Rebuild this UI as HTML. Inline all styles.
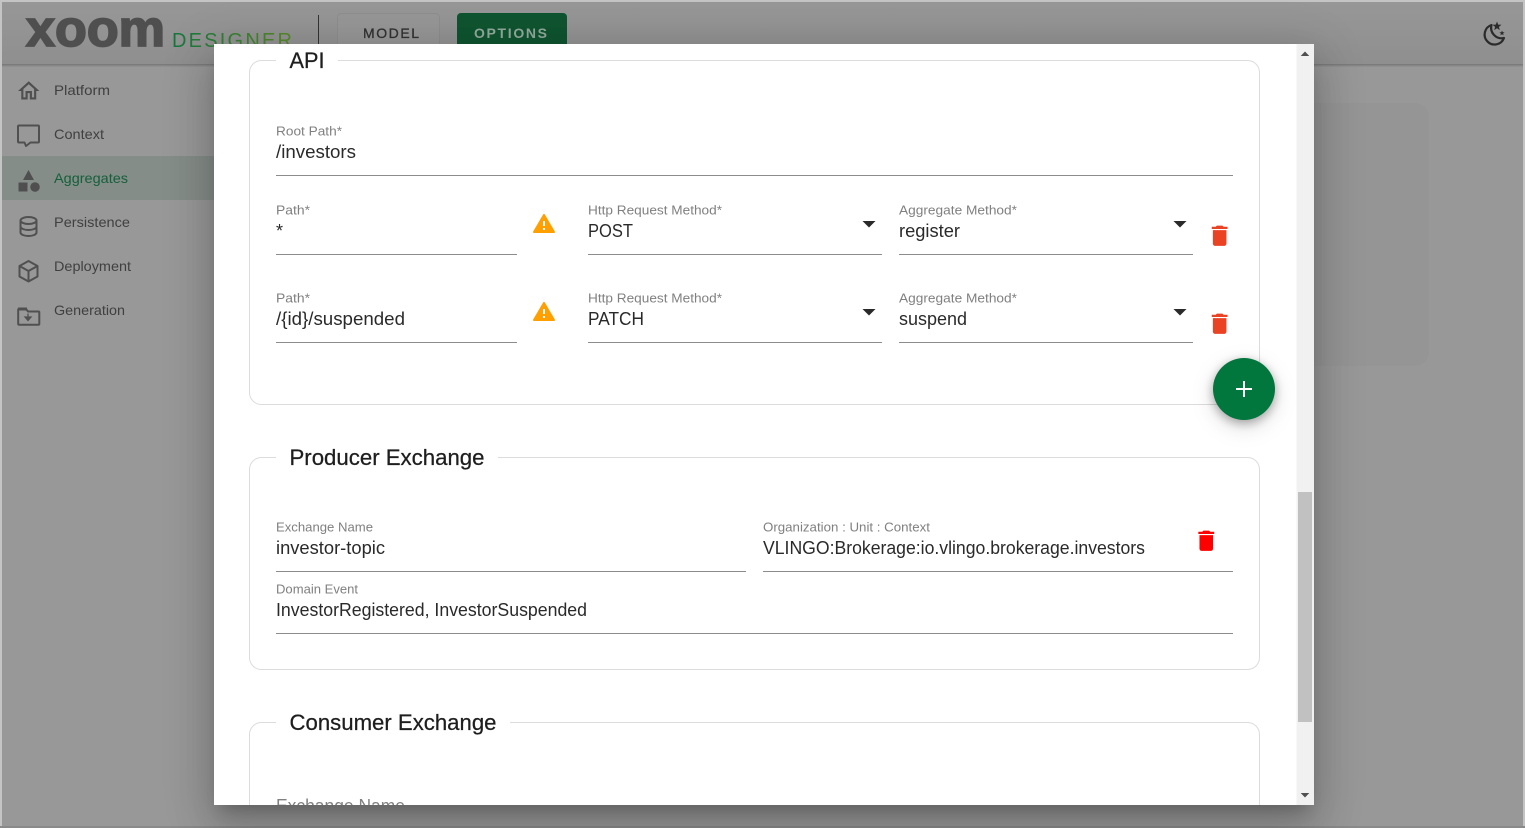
<!DOCTYPE html>
<html><head><meta charset="utf-8"><title>Xoom Designer</title>
<style>
html,body{margin:0;padding:0;width:1525px;height:828px;overflow:hidden;background:#989898}
svg{position:absolute;left:0;top:0;display:block}
text{font-family:"Liberation Sans",sans-serif}
#modal{position:absolute;left:214px;top:44px;width:1100px;height:761px;background:#fff;overflow:hidden;box-shadow:0 11px 15px -7px rgba(0,0,0,.2),0 24px 38px 3px rgba(0,0,0,.14),0 9px 46px 8px rgba(0,0,0,.12)}
.l{font-size:13px;fill:#808080}
.v{font-size:18px;fill:#2a2a2a}
.h{font-size:22px;fill:#1e1e1e;stroke:#1e1e1e;stroke-width:.25}
.n{font-size:14px;fill:#404040}
.u{stroke:#8c8c8c;stroke-width:1}
.f{fill:none;stroke:#dcdcdc;stroke-width:1}
</style></head><body>
<svg width="1525" height="828" viewBox="0 0 1525 828">
<defs>
<linearGradient id="dg" x1="0" x2="1" y1="0" y2="0"><stop offset="0" stop-color="#14773d"/><stop offset="1" stop-color="#5a8a2a"/></linearGradient>
<linearGradient id="hd" x1="0" x2="0" y1="0" y2="1"><stop offset="0" stop-color="#979797"/><stop offset="1" stop-color="#8f8f8f"/></linearGradient>
</defs>
<rect x="0" y="0" width="1525" height="828" fill="#989898"/>
<rect x="1100" y="103" width="329" height="263" rx="14" fill="#959595"/>
<rect x="2" y="156" width="212" height="44" fill="#858d89"/>
<rect x="2" y="2" width="1521" height="62" fill="url(#hd)"/>
<rect x="2" y="64" width="1521" height="1" fill="#7b7b7b"/>
<rect x="2" y="65" width="1521" height="1" fill="#868686"/>
<rect x="2" y="66" width="1521" height="1" fill="#909090"/>
<rect x="0" y="0" width="1525" height="2" fill="#c4c4c4"/>
<rect x="0" y="0" width="2" height="828" fill="#c4c4c4"/>
<rect x="1523" y="0" width="2" height="828" fill="#c4c4c4"/>
<rect x="0" y="826" width="1525" height="2" fill="#8a8a8a"/>

<text x="26" y="46" font-size="51" font-weight="700" fill="#4f4f4f" stroke="#4f4f4f" stroke-width="1.800" textLength="139" lengthAdjust="spacingAndGlyphs">xoom</text>
<text x="172" y="47" font-size="20" fill="url(#dg)" textLength="120" lengthAdjust="spacing">DESIGNER</text>
<line x1="318.5" y1="15" x2="318.5" y2="46" stroke="#333" stroke-width="1"/>
<rect x="337.5" y="13.5" width="102" height="40" rx="4" fill="#969696" stroke="#8d8d8d"/>
<text x="363" y="38" font-size="14" fill="#333" stroke="#333" stroke-width=".3" textLength="56" lengthAdjust="spacing">MODEL</text>
<rect x="457" y="13" width="110" height="40" rx="4" fill="#0f5430"/>
<text x="474" y="38" font-size="14" font-weight="700" fill="#93a99c" textLength="73" lengthAdjust="spacing">OPTIONS</text>

<g fill="none" stroke="#2b2b2b" stroke-width="2.2"><path d="M1491.5 25a10 10 0 1 0 12.5 13a10.500 10.500 0 0 1-12.500-13z" stroke-linejoin="round"/></g>
<path d="M1497 21.500l1.200 3.100 3.300.2-2.600 2.100.9 3.200-2.800-1.800-2.800 1.800.9-3.200-2.600-2.100 3.300-.2z" fill="#2b2b2b"/>
<path d="M1502 30.500l.7 1.700 1.900.1-1.500 1.200.5 1.800-1.600-1-1.600 1 .5-1.800-1.500-1.200 1.900-.1z" fill="#2b2b2b"/>

<g class="n">
<text x="54" y="95" textLength="56" lengthAdjust="spacingAndGlyphs">Platform</text>
<text x="54" y="139" textLength="50" lengthAdjust="spacingAndGlyphs">Context</text>
<text x="54" y="183" textLength="74" lengthAdjust="spacingAndGlyphs" style="fill:#14603a">Aggregates</text>
<text x="54" y="227" textLength="76" lengthAdjust="spacingAndGlyphs">Persistence</text>
<text x="54" y="271" textLength="77" lengthAdjust="spacingAndGlyphs">Deployment</text>
<text x="54" y="315" textLength="71" lengthAdjust="spacingAndGlyphs">Generation</text>
</g>
<g fill="#4f4f4f">
<path transform="translate(15.900,78.100) scale(1.070)" d="M12 5.690l5 4.500V18h-2v-6H9v6H7v-7.810l5-4.500M12 3L2 12h3v8h6v-6h2v6h6v-8h3L12 3z"/>
<path d="M28.500 170l5.500 10h-11z"/>
<rect x="18.500" y="182.500" width="9" height="9"/>
<circle cx="35" cy="187" r="4.800"/>
</g>
<g fill="none" stroke="#505050" stroke-width="2" stroke-linejoin="round">
<path d="M19 125.500h19a1 1 0 0 1 1 1v15a1 1 0 0 1-1 1H30.500l-4.500 3.500-1.500-3.500H19a1 1 0 0 1-1-1v-15a1 1 0 0 1 1-1z"/>
<ellipse cx="28.500" cy="220.500" rx="8" ry="3.500"/>
<path d="M20.500 220.500v12c0 2 3.600 3.500 8 3.500s8-1.500 8-3.500v-12M20.500 226.500c0 2 3.600 3.500 8 3.500s8-1.500 8-3.500"/>
<path d="M28.500 261l9 5v10.500l-9 5-9-5V266zM19.500 266l9 5 9-5M28.500 271v10.500"/>
<path d="M19 309h7l2 2.500h10.500a.8.800 0 0 1 .8.800V324a.8.800 0 0 1-.8.800H19a.8.800 0 0 1-.8-.800V309.800a.8.800 0 0 1 .8-.800z"/>
</g>
<rect x="18" y="307.500" width="9" height="3" fill="#505050"/>
<path d="M28 313.500v6M25 317l3 3.500 3-3.500z" fill="#505050" stroke="#505050" stroke-width="1.300"/>
</svg>

<div id="modal">
<svg width="1100" height="761" viewBox="214 44 1100 761" style="overflow:hidden">
<path class="f" d="M276 60.500H261.500a12 12 0 0 0-12 12v320a12 12 0 0 0 12 12h986a12 12 0 0 0 12-12v-320a12 12 0 0 0-12-12H338"/>
<path class="f" d="M276 457.500H261.500a12 12 0 0 0-12 12v188a12 12 0 0 0 12 12h986a12 12 0 0 0 12-12v-188a12 12 0 0 0-12-12H498"/>
<path class="f" d="M276 722.500H261.500a12 12 0 0 0-12 12v80M1259.500 815v-80.500a12 12 0 0 0-12-12H510"/>

<text class="h" x="289.500" y="68" textLength="35" lengthAdjust="spacingAndGlyphs">API</text>
<text class="h" x="289.500" y="465" textLength="195" lengthAdjust="spacingAndGlyphs">Producer Exchange</text>
<text class="h" x="289.500" y="730" textLength="207" lengthAdjust="spacingAndGlyphs">Consumer Exchange</text>

<text class="l" x="276" y="135.500" textLength="66" lengthAdjust="spacingAndGlyphs">Root Path*</text>
<text class="v" x="276" y="158" textLength="80" lengthAdjust="spacingAndGlyphs">/investors</text>
<line class="u" x1="276" y1="175.500" x2="1233" y2="175.500"/>

<text class="l" x="276" y="214.500" textLength="34" lengthAdjust="spacingAndGlyphs">Path*</text>
<text class="v" x="276" y="237">*</text>
<line class="u" x1="276" y1="254.500" x2="517" y2="254.500"/>
<text class="l" x="588" y="214.500" textLength="134" lengthAdjust="spacingAndGlyphs">Http Request Method*</text>
<text class="v" x="588" y="237" textLength="45" lengthAdjust="spacingAndGlyphs">POST</text>
<line class="u" x1="588" y1="254.500" x2="882" y2="254.500"/>
<text class="l" x="899" y="214.500" textLength="118" lengthAdjust="spacingAndGlyphs">Aggregate Method*</text>
<text class="v" x="899" y="237" textLength="61" lengthAdjust="spacingAndGlyphs">register</text>
<line class="u" x1="899" y1="254.500" x2="1193" y2="254.500"/>

<text class="l" x="276" y="302.500" textLength="34" lengthAdjust="spacingAndGlyphs">Path*</text>
<text class="v" x="276" y="325" textLength="129" lengthAdjust="spacingAndGlyphs">/{id}/suspended</text>
<line class="u" x1="276" y1="342.500" x2="517" y2="342.500"/>
<text class="l" x="588" y="302.500" textLength="134" lengthAdjust="spacingAndGlyphs">Http Request Method*</text>
<text class="v" x="588" y="325" textLength="56" lengthAdjust="spacingAndGlyphs">PATCH</text>
<line class="u" x1="588" y1="342.500" x2="882" y2="342.500"/>
<text class="l" x="899" y="302.500" textLength="118" lengthAdjust="spacingAndGlyphs">Aggregate Method*</text>
<text class="v" x="899" y="325" textLength="68" lengthAdjust="spacingAndGlyphs">suspend</text>
<line class="u" x1="899" y1="342.500" x2="1193" y2="342.500"/>

<g fill="#ffa000" stroke="#ffa000" stroke-width="2" stroke-linejoin="round">
<path d="M544 215l10 17h-20z"/>
<path d="M544 303l10 17h-20z"/>
</g>
<g fill="#fff">
<rect x="543" y="221" width="2" height="5"/><rect x="543" y="228" width="2" height="2"/>
<rect x="543" y="309" width="2" height="5"/><rect x="543" y="316" width="2" height="2"/>
</g>
<g fill="#2a2a2a">
<path d="M862.500 221h13l-6.500 6.500z"/><path d="M1173.500 221h13l-6.500 6.500z"/>
<path d="M862.500 309h13l-6.500 6.500z"/><path d="M1173.500 309h13l-6.500 6.500z"/>
</g>
<g fill="#e94324">
<path transform="translate(1206.100,222.200) scale(1.130)" d="M6 19c0 1.100.9 2 2 2h8c1.100 0 2-.9 2-2V7H6v12zM19 4h-3.500l-1-1h-5l-1 1H5v2h14V4z"/>
<path transform="translate(1206.100,310.200) scale(1.130)" d="M6 19c0 1.100.9 2 2 2h8c1.100 0 2-.9 2-2V7H6v12zM19 4h-3.500l-1-1h-5l-1 1H5v2h14V4z"/>
</g>

<text class="l" x="276" y="531.500" textLength="97" lengthAdjust="spacingAndGlyphs">Exchange Name</text>
<text class="v" x="276" y="554" textLength="109" lengthAdjust="spacingAndGlyphs">investor-topic</text>
<line class="u" x1="276" y1="571.500" x2="746" y2="571.500"/>
<text class="l" x="763" y="531.500" textLength="167" lengthAdjust="spacingAndGlyphs">Organization : Unit : Context</text>
<text class="v" x="763" y="554" textLength="382" lengthAdjust="spacingAndGlyphs">VLINGO:Brokerage:io.vlingo.brokerage.investors</text>
<line class="u" x1="763" y1="571.500" x2="1233" y2="571.500"/>
<path fill="#ff0000" transform="translate(1192.700,527.200) scale(1.130)" d="M6 19c0 1.100.9 2 2 2h8c1.100 0 2-.9 2-2V7H6v12zM19 4h-3.500l-1-1h-5l-1 1H5v2h14V4z"/>
<text class="l" x="276" y="593.500" textLength="82" lengthAdjust="spacingAndGlyphs">Domain Event</text>
<text class="v" x="276" y="616" textLength="311" lengthAdjust="spacingAndGlyphs">InvestorRegistered, InvestorSuspended</text>
<line class="u" x1="276" y1="633.500" x2="1233" y2="633.500"/>

<text x="276" y="812" font-size="18" fill="#808080" textLength="129" lengthAdjust="spacingAndGlyphs">Exchange Name</text>

<circle cx="1244" cy="389" r="31" fill="#02773d" style="filter:drop-shadow(0 3px 5px rgba(0,0,0,.3)) drop-shadow(0 6px 10px rgba(0,0,0,.14))"/>
<path d="M1243 381h2v7h7v2h-7v7h-2v-7h-7v-2h7z" fill="#fff"/>

<rect x="1296.500" y="44" width="17.500" height="761" fill="#f1f1f1"/>
<rect x="1298" y="492" width="14" height="230" fill="#c1c1c1"/>
<path d="M1305 51.500l4.300 4.500h-8.600z" fill="#505050"/>
<path d="M1305 797.500l4.300-4.500h-8.600z" fill="#505050"/>
</svg>
</div>
</body></html>
